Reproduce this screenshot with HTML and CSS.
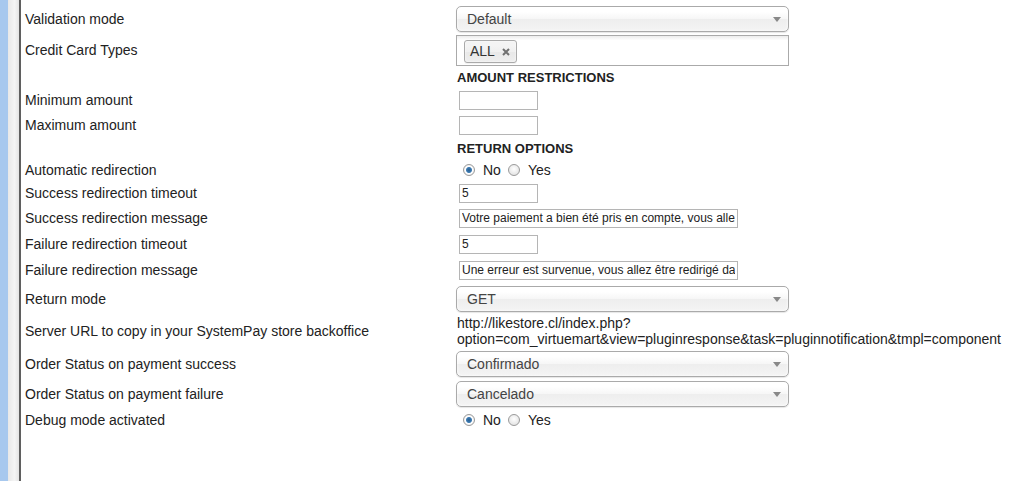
FILE: index.html
```html
<!DOCTYPE html>
<html lang="en">
<head>
    <meta charset="UTF-8">
    <title>SystemPay parameters</title>
    <link rel="stylesheet" href="styles.css">
</head>
<body>
    <div class="frame"></div>
    <div class="gutter"></div>

    <div class="params">
        <!-- Validation -->
        <div class="row r-select">
            <div class="label">Validation mode</div>
            <div class="field"><div class="chzn-single"><span>Default</span><b></b></div></div>
        </div>
        <div class="row r-multi">
            <div class="label">Credit Card Types</div>
            <div class="field">
                <div class="chzn-multi">
                    <span class="choice">ALL<svg class="close" width="8" height="8" viewBox="0 0 8 8"><path d="M1 1L7 7M7 1L1 7"/></svg></span>
                </div>
            </div>
        </div>

        <!-- Amount restrictions -->
        <div class="row r-head">
            <div class="label"></div>
            <div class="field"><h4>AMOUNT RESTRICTIONS</h4></div>
        </div>
        <div class="row r-input first">
            <div class="label">Minimum amount</div>
            <div class="field"><input type="text" class="small"></div>
        </div>
        <div class="row r-input">
            <div class="label">Maximum amount</div>
            <div class="field"><input type="text" class="small"></div>
        </div>

        <!-- Return options -->
        <div class="row r-head">
            <div class="label"></div>
            <div class="field"><h4>RETURN OPTIONS</h4></div>
        </div>
        <div class="row r-radio">
            <div class="label">Automatic redirection</div>
            <div class="field radios">
                <label><input type="radio" name="redirect" checked> No</label>
                <label><input type="radio" name="redirect"> Yes</label>
            </div>
        </div>
        <div class="row r-input first">
            <div class="label">Success redirection timeout</div>
            <div class="field"><input type="text" class="small" value="5"></div>
        </div>
        <div class="row r-input">
            <div class="label">Success redirection message</div>
            <div class="field"><input type="text" class="wide" value="Votre paiement a bien été pris en compte, vous allez être redirigé dans quelques instants."></div>
        </div>
        <div class="row r-input">
            <div class="label">Failure redirection timeout</div>
            <div class="field"><input type="text" class="small" value="5"></div>
        </div>
        <div class="row r-input">
            <div class="label">Failure redirection message</div>
            <div class="field"><input type="text" class="wide" value="Une erreur est survenue, vous allez être redirigé dans quelques instants."></div>
        </div>
        <div class="row r-select2">
            <div class="label">Return mode</div>
            <div class="field"><div class="chzn-single"><span>GET</span><b></b></div></div>
        </div>
        <div class="row r-url">
            <div class="label">Server URL to copy in your SystemPay store backoffice</div>
            <div class="field url">http://likestore.cl/index.php?<br>option=com_virtuemart&amp;view=pluginresponse&amp;task=pluginnotification&amp;tmpl=component</div>
        </div>
        <div class="row r-select2">
            <div class="label">Order Status on payment success</div>
            <div class="field"><div class="chzn-single"><span>Confirmado</span><b></b></div></div>
        </div>
        <div class="row r-select3">
            <div class="label">Order Status on payment failure</div>
            <div class="field"><div class="chzn-single"><span>Cancelado</span><b></b></div></div>
        </div>
        <div class="row r-radio2">
            <div class="label">Debug mode activated</div>
            <div class="field radios">
                <label><input type="radio" name="debug" checked> No</label>
                <label><input type="radio" name="debug"> Yes</label>
            </div>
        </div>
    </div>
</body>
</html>
```

FILE: styles.css
```css
html, body {
    height: 100%;
}
body {
    margin: 0;
    display: flex;
    font-family: "Liberation Sans", Arial, sans-serif;
    font-size: 14px;
    color: #222;
    background-color: #fff;
    overflow: hidden;
}
.frame {
    width: 8px;
    background-color: #a7c8ee;
}
.gutter {
    width: 11px;
    background: linear-gradient(to right, #e8e8e8, #f5f5f5 60%, #e4e4e4);
    border-right: 2px solid #5f5f5f;
}
.params {
    flex: 1;
    padding: 4px 0 0 4px;
}
.row {
    display: grid;
    grid-template-columns: 431px 1fr;
    align-items: center;
}
.label {
    white-space: nowrap;
}
.r-select { height: 29px; }
.r-multi { height: 34px; }
.r-head { height: 21px; }
.r-input { height: 26px; }
.r-input.first { height: 24px; }
.r-radio { height: 22px; }
.r-select2 { height: 31px; }
.r-url { height: 34px; }
.r-select3 { height: 29px; }
.r-radio2 { height: 24px; }

h4 {
    margin: 0 0 0 1px;
    font-size: 13px;
    font-weight: bold;
    color: #222;
}

/* chosen-like select */
.chzn-single {
    position: relative;
    box-sizing: border-box;
    width: 333px;
    height: 26px;
    line-height: 24px;
    padding-left: 10px;
    border: 1px solid #aaa;
    border-radius: 5px;
    background: linear-gradient(#fff 20%, #f6f6f6 50%, #eee 52%, #f4f4f4 100%);
    box-shadow: 0 0 3px #fff inset, 0 1px 1px rgba(0, 0, 0, 0.1);
    color: #444;
}
.chzn-single b {
    position: absolute;
    right: 7px;
    top: 10px;
    border-top: 5px solid #888;
    border-left: 4px solid transparent;
    border-right: 4px solid transparent;
}
.chzn-multi {
    box-sizing: border-box;
    width: 333px;
    height: 31px;
    padding: 4px 7px;
    border: 1px solid #aaa;
    background: linear-gradient(#eee 1%, #fff 15%);
}
.choice {
    display: inline-flex;
    align-items: center;
    box-sizing: border-box;
    height: 23px;
    padding: 0 6px 0 5px;
    border: 1px solid #aaa;
    border-radius: 3px;
    background: linear-gradient(#f4f4f4 20%, #f0f0f0 50%, #e8e8e8 52%, #eee 100%);
    box-shadow: 0 0 2px #fff inset, 0 1px 0 rgba(0, 0, 0, 0.05);
    color: #333;
}
.close {
    margin: 1px 0 0 7px;
    stroke: #707070;
    stroke-width: 2;
}

/* text inputs */
input[type="text"] {
    box-sizing: border-box;
    height: 19px;
    margin-left: 3px;
    padding: 0 2px;
    border: 1px solid #b5b5b5;
    font-family: "Liberation Sans", Arial, sans-serif;
    font-size: 12px;
    color: #222;
    outline: none;
}
input.small {
    width: 79px;
}
input.wide {
    width: 279px;
}

/* radios */
.radios {
    display: flex;
    align-items: center;
    padding-left: 7px;
}
.radios label {
    display: flex;
    align-items: center;
    margin-right: 7px;
}
.radios input {
    appearance: none;
    width: 12px;
    height: 12px;
    margin: 0 8px 0 0;
    border: 1px solid #9a9a9a;
    border-radius: 50%;
    background: radial-gradient(circle at 50% 40%, #fff, #dcdcdc);
}
.radios input:checked {
    background: radial-gradient(circle, #2a5d8c 0, #3c7bb3 2.5px, #fff 3.5px, #dedede 100%);
}

.url {
    padding-left: 1px;
    line-height: 16px;
    white-space: nowrap;
}
```
